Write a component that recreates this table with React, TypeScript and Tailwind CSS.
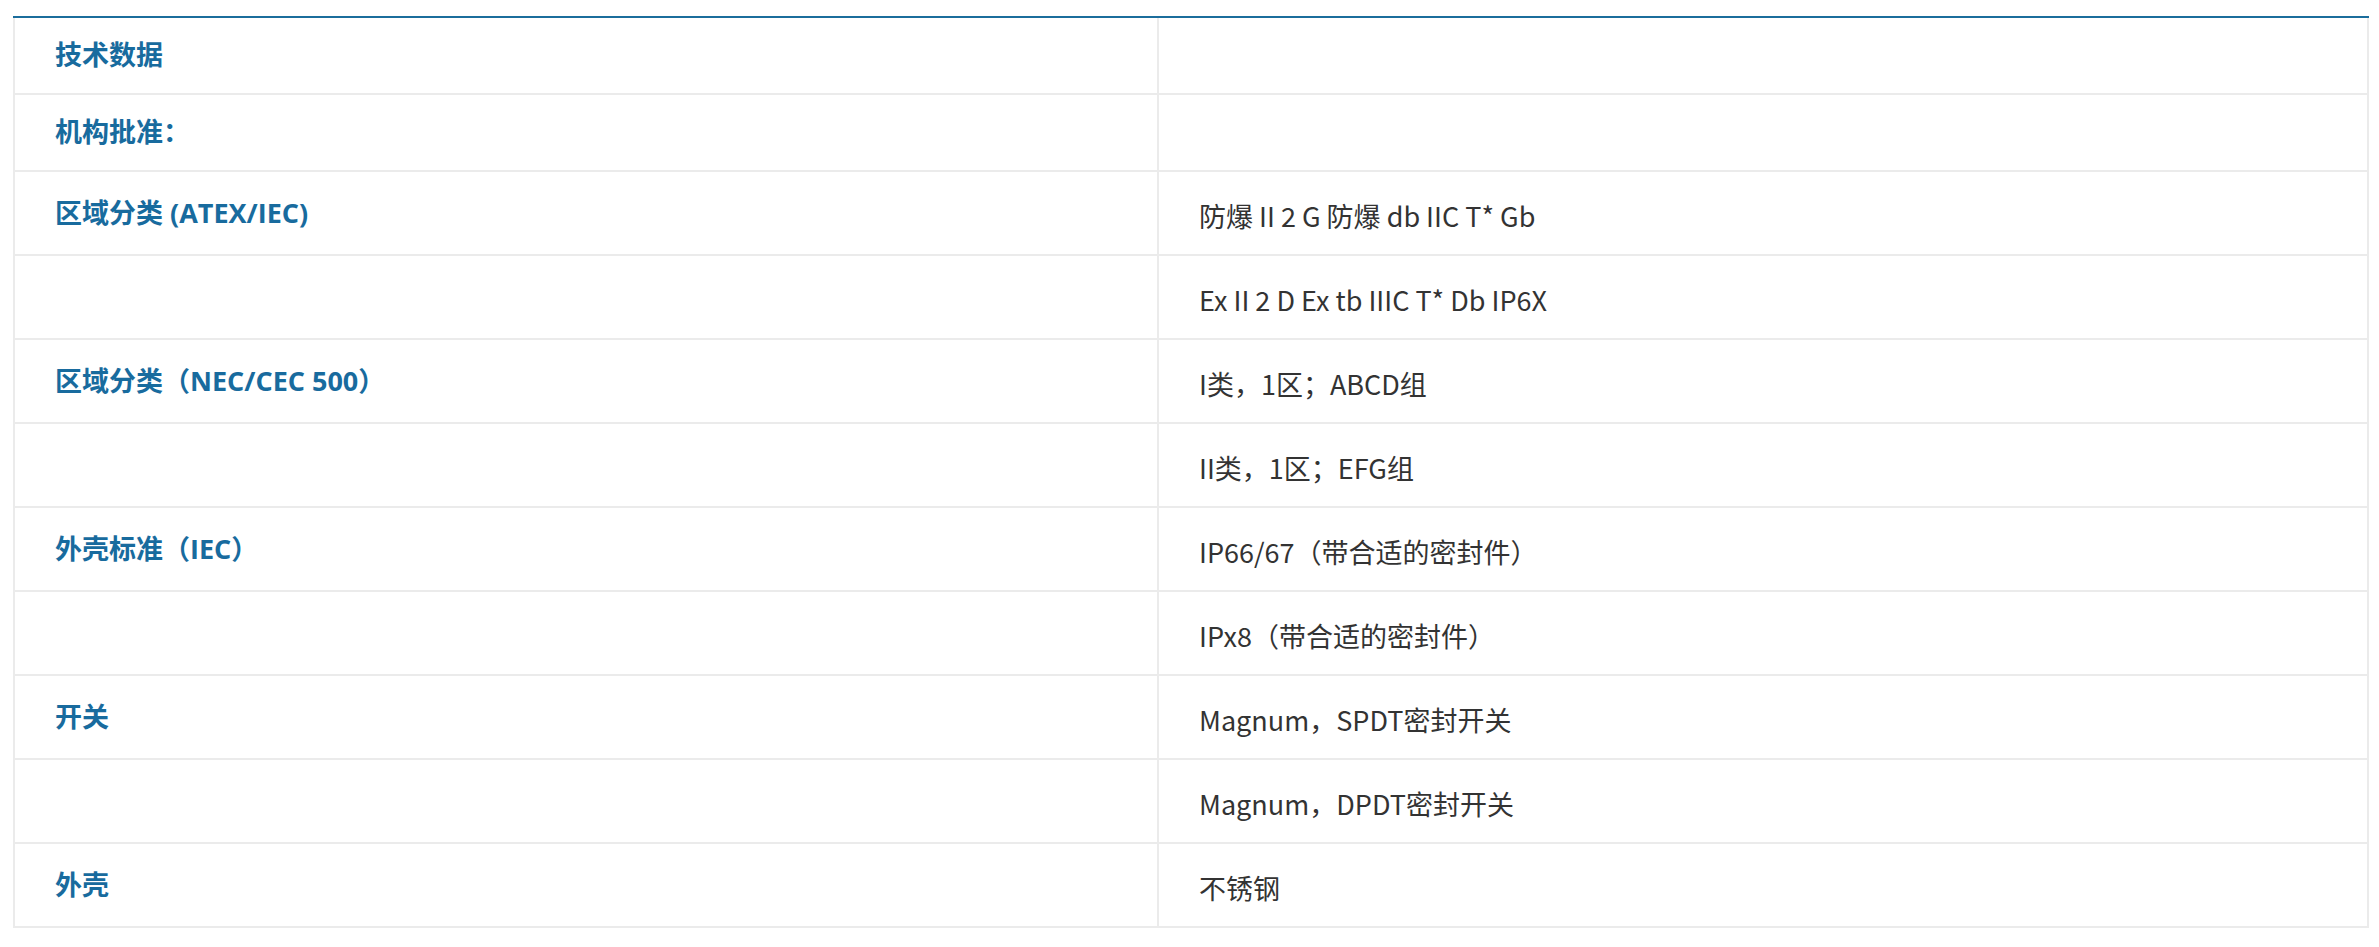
const rows: { label: string; value: string; short?: boolean }[] = [
  { label: "技术数据", value: "", short: true },
  { label: "机构批准：", value: "", short: true },
  { label: "区域分类 (ATEX/IEC)", value: "防爆 II 2 G 防爆 db IIC T* Gb" },
  { label: "", value: "Ex II 2 D Ex tb IIIC T* Db IP6X" },
  { label: "区域分类（NEC/CEC 500）", value: "I类，1区；ABCD组" },
  { label: "", value: "II类，1区；EFG组" },
  { label: "外壳标准（IEC）", value: "IP66/67（带合适的密封件）" },
  { label: "", value: "IPx8（带合适的密封件）" },
  { label: "开关", value: "Magnum，SPDT密封开关" },
  { label: "", value: "Magnum，DPDT密封开关" },
  { label: "外壳", value: "不锈钢" },
];

const App = () => {
  return (
    <div
      className="min-h-[947px] bg-white pt-4 pl-[13px]"
      style={{ fontFamily: '"Open Sans", "Noto Sans CJK SC", sans-serif' }}
    >
      <div className="w-[2356px] border-t-2 border-[#1b6d9c]">
        <div className="border-x-2 border-[#ebebeb]">
          {rows.map((row, index) => (
            <div
              key={index}
              className={`grid grid-cols-[1144px_1fr] border-b-2 border-[#ebebeb] ${
                row.short ? "h-[77px]" : "h-[84px]"
              }`}
            >
              <div className="flex items-center border-r-2 border-[#ebebeb] pl-10 text-[27px] font-bold text-[#186b9e]">
                {row.label}
              </div>
              <div className="flex items-center pl-10 pt-[6px] font-['Noto_Sans_CJK_SC',sans-serif] text-[27px] text-[#333333]">
                {row.value}
              </div>
            </div>
          ))}
        </div>
      </div>
    </div>
  );
};

export default App;
